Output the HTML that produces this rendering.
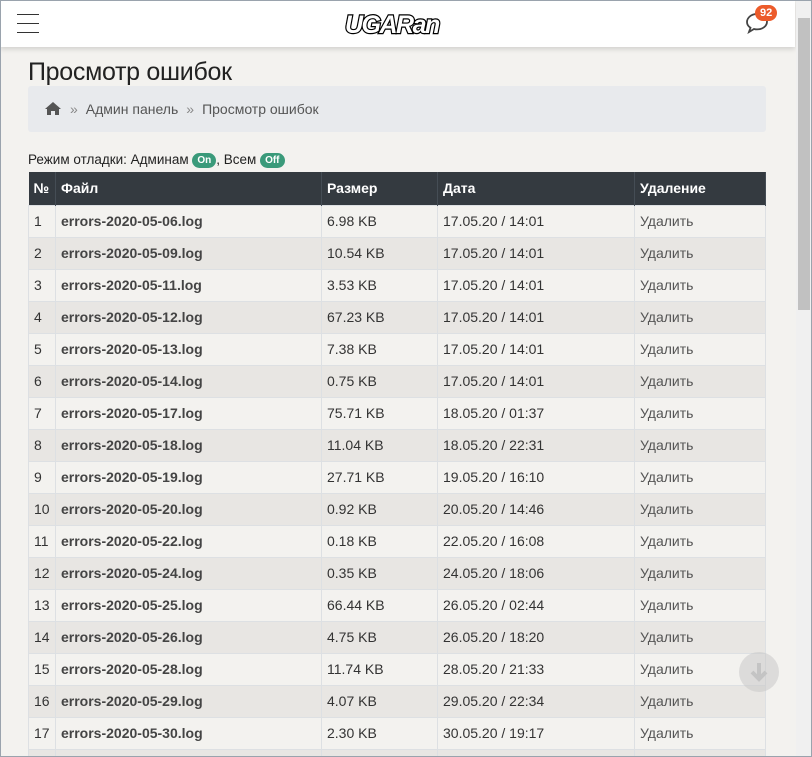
<!DOCTYPE html>
<html style="width:812px;height:757px;overflow:hidden"><head><meta charset="utf-8"><style>
*{box-sizing:border-box;margin:0;padding:0}
body{width:812px;height:757px;overflow:hidden;background:#f3f2ef;font-family:"Liberation Sans",sans-serif;color:#333;position:relative}
.frame{position:absolute;left:0;top:0;width:812px;height:757px;border:1px solid #9aa3ad;pointer-events:none;z-index:9}
.hdr{position:absolute;left:0;top:0;width:795px;height:47px;background:#fff;box-shadow:0 2px 5px rgba(0,0,0,.15);z-index:2}
.sb{position:absolute;right:0;top:0;width:16px;height:757px;background:#f0f0f0;z-index:3}
.thumb{position:absolute;right:2px;top:18px;width:12px;height:292px;background:#c1c1c1}
.ham{position:absolute;left:17px;top:14px;width:22px}
.ham i{display:block;height:1px;background:#333;margin-bottom:8px;width:22px}
h1{position:absolute;left:28px;top:58px;font-weight:normal;font-size:25px;color:#222;letter-spacing:-.3px}
.bc{position:absolute;left:28px;top:86px;width:738px;height:46px;background:#e8eaed;border-radius:3px;font-size:14px;color:#555;padding:15px 0 0 16px}
.bc span{color:#888;margin:0 8px}
.dbg{position:absolute;left:28px;top:152px;font-size:13.5px;color:#222}
.pill{display:inline-block;background:#3a9a7a;color:#fff;font-size:10px;font-weight:bold;border-radius:8px;padding:2px 5px;vertical-align:1px}
.tw{position:absolute;left:28px;top:172px;width:738px;height:585px;overflow:hidden}
table{width:738px;border-collapse:collapse;font-size:14px}
th{background:#343a40;color:#fff;text-align:left;height:33px;padding:0 5px;font-weight:bold;border-right:1px solid #454d55}
td{height:32px;padding:0 5px;border:1px solid #dde0e3;color:#333}
tr:nth-child(odd) td{background:#e8e6e3}
tr:nth-child(even) td{background:#f3f2ef}
td.f{font-weight:bold;color:#444}
td.d{color:#555}
.dn{position:absolute;left:739px;top:652px;width:40px;height:40px;border-radius:50%;background:rgba(200,200,200,.55)}
</style></head><body>
<div class="frame"></div>
<div class="hdr">
<div class="ham"><i></i><i></i><i></i></div>
<div style="position:absolute;left:345px;top:11px;font:italic 900 25px 'Liberation Sans',sans-serif;color:#fff;-webkit-text-stroke:2.4px #000;paint-order:stroke;letter-spacing:-1.5px">UGARan</div>
<svg style="position:absolute;left:745px;top:12px" width="26" height="22" viewBox="0 0 26 22"><path d="M12 2C6 2 2 6 2 10c0 2.5 1.5 4.5 3.5 5.8L4 20l5-3c1 .3 2 .4 3 .4 6 0 10-3.6 10-7.8S18 2 12 2z" fill="none" stroke="#444" stroke-width="1.8"/></svg>
<div style="position:absolute;left:755px;top:5px;background:#ec5b2b;color:#fff;font-size:11px;font-weight:bold;border-radius:9px;padding:2px 5px">92</div>
</div>
<div class="sb"><div class="thumb"></div></div>
<h1>Просмотр ошибок</h1>
<div class="bc"><svg width="18" height="15" viewBox="0 0 18 15" style="vertical-align:-2px"><path d="M9 1L1 8h2v6h4v-4h4v4h4V8h2z" fill="#555"/></svg><span>»</span>Админ панель<span>»</span>Просмотр ошибок</div>
<div class="dbg">Режим отладки: Админам <span class="pill">On</span>, Всем <span class="pill">Off</span></div>
<div class="tw"><table>
<tr><th style="width:27px">№</th><th style="width:266px">Файл</th><th style="width:116px">Размер</th><th style="width:197px">Дата</th><th>Удаление</th></tr>
<tr><td>1</td><td class="f">errors-2020-05-06.log</td><td>6.98 KB</td><td>17.05.20 / 14:01</td><td class="d">Удалить</td></tr>
<tr><td>2</td><td class="f">errors-2020-05-09.log</td><td>10.54 KB</td><td>17.05.20 / 14:01</td><td class="d">Удалить</td></tr>
<tr><td>3</td><td class="f">errors-2020-05-11.log</td><td>3.53 KB</td><td>17.05.20 / 14:01</td><td class="d">Удалить</td></tr>
<tr><td>4</td><td class="f">errors-2020-05-12.log</td><td>67.23 KB</td><td>17.05.20 / 14:01</td><td class="d">Удалить</td></tr>
<tr><td>5</td><td class="f">errors-2020-05-13.log</td><td>7.38 KB</td><td>17.05.20 / 14:01</td><td class="d">Удалить</td></tr>
<tr><td>6</td><td class="f">errors-2020-05-14.log</td><td>0.75 KB</td><td>17.05.20 / 14:01</td><td class="d">Удалить</td></tr>
<tr><td>7</td><td class="f">errors-2020-05-17.log</td><td>75.71 KB</td><td>18.05.20 / 01:37</td><td class="d">Удалить</td></tr>
<tr><td>8</td><td class="f">errors-2020-05-18.log</td><td>11.04 KB</td><td>18.05.20 / 22:31</td><td class="d">Удалить</td></tr>
<tr><td>9</td><td class="f">errors-2020-05-19.log</td><td>27.71 KB</td><td>19.05.20 / 16:10</td><td class="d">Удалить</td></tr>
<tr><td>10</td><td class="f">errors-2020-05-20.log</td><td>0.92 KB</td><td>20.05.20 / 14:46</td><td class="d">Удалить</td></tr>
<tr><td>11</td><td class="f">errors-2020-05-22.log</td><td>0.18 KB</td><td>22.05.20 / 16:08</td><td class="d">Удалить</td></tr>
<tr><td>12</td><td class="f">errors-2020-05-24.log</td><td>0.35 KB</td><td>24.05.20 / 18:06</td><td class="d">Удалить</td></tr>
<tr><td>13</td><td class="f">errors-2020-05-25.log</td><td>66.44 KB</td><td>26.05.20 / 02:44</td><td class="d">Удалить</td></tr>
<tr><td>14</td><td class="f">errors-2020-05-26.log</td><td>4.75 KB</td><td>26.05.20 / 18:20</td><td class="d">Удалить</td></tr>
<tr><td>15</td><td class="f">errors-2020-05-28.log</td><td>11.74 KB</td><td>28.05.20 / 21:33</td><td class="d">Удалить</td></tr>
<tr><td>16</td><td class="f">errors-2020-05-29.log</td><td>4.07 KB</td><td>29.05.20 / 22:34</td><td class="d">Удалить</td></tr>
<tr><td>17</td><td class="f">errors-2020-05-30.log</td><td>2.30 KB</td><td>30.05.20 / 19:17</td><td class="d">Удалить</td></tr>
<tr><td>18</td><td class="f">errors-2020-05-31.log</td><td>1.00 KB</td><td>31.05.20 / 10:00</td><td class="d">Удалить</td></tr>
</table></div>
<div class="dn"><svg width="40" height="40" viewBox="0 0 40 40"><path d="M20 11v15M13 20l7 7 7-7" fill="none" stroke="#c4c4c4" stroke-width="4"/></svg></div>
</body></html>
